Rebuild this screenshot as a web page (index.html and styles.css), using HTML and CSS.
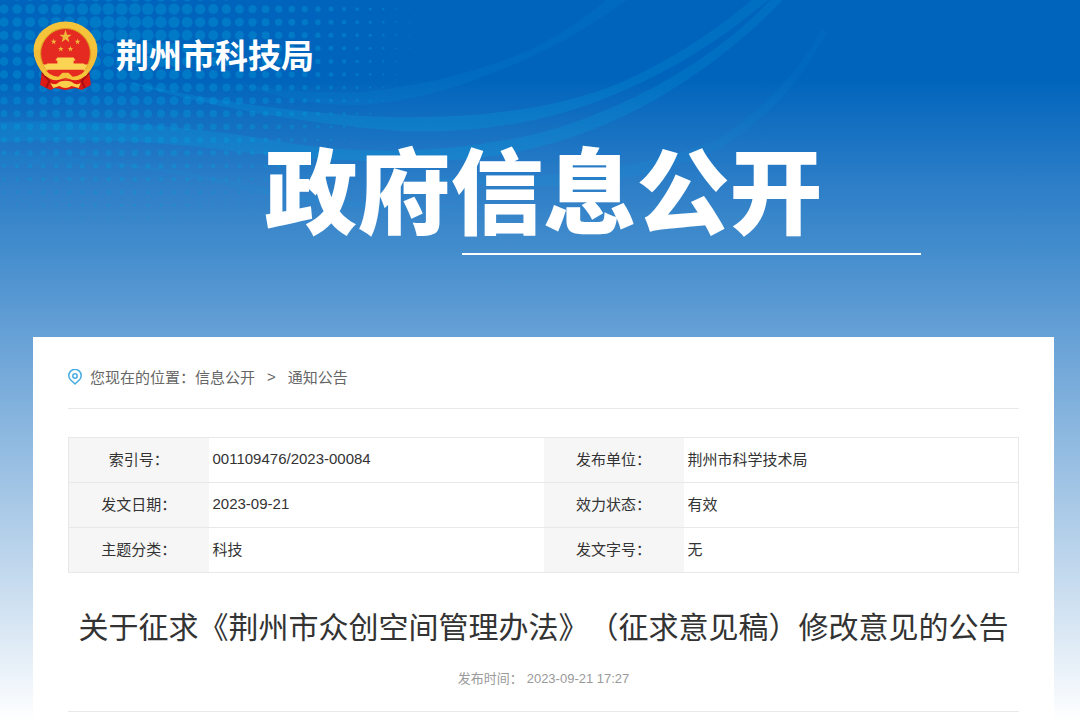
FILE: index.html
```html
<!DOCTYPE html>
<html lang="zh-CN">
<head>
    <meta charset="UTF-8">
    <meta name="viewport" content="width=device-width, initial-scale=1.0">
    <title>荆州市科技局 - 政府信息公开</title>
    <link rel="stylesheet" href="styles.css">
</head>
<body>
<svg class="bg" width="1080" height="340" viewBox="0 0 1080 340" aria-hidden="true">
    <defs>
        <linearGradient id="fade" gradientUnits="userSpaceOnUse" x1="0" y1="0" x2="860" y2="0">
            <stop offset="0" stop-color="#00a5e0" stop-opacity=".2"/>
            <stop offset=".5" stop-color="#00a5e0" stop-opacity=".24"/>
            <stop offset="1" stop-color="#00a5e0" stop-opacity=".14"/>
        </linearGradient>
    </defs>
    <g id="dots" fill="#00a0dc" fill-opacity=".34"></g>
    <g fill="url(#fade)">
        <path fill-opacity=".45" d="M240 84 Q300 94 360 92 Q450 84 530 50 Q575 27 607 0 L627 0 Q560 48 500 70 Q430 100 360 105 Q300 106 240 84Z"/>
        <path d="M120 80 Q240 108 360 116 Q520 124 620 83 Q690 52 752 0 L768 0 Q700 58 620 92 Q520 136 400 131 Q240 118 120 80Z"/>
        <path d="M0 122 Q130 118 260 138 Q400 166 540 133 Q640 105 720 45 Q750 22 770 0 L783 0 Q720 65 640 108 Q540 160 430 161 Q330 164 200 147 Q100 136 0 142Z"/>
        <path fill-opacity=".5" d="M420 178 Q620 182 720 138 Q790 90 822 29 L826 33 Q790 105 720 148 Q600 204 420 178Z"/>
        <path fill-opacity=".35" d="M0 152 Q140 160 280 190 Q380 210 480 206 Q340 218 220 184 Q110 156 0 166Z"/>
    </g>
</svg>

<header class="header">
    <svg class="emblem" viewBox="0 0 64 69" role="img" aria-label="国徽">
        <path d="M9 47 L7 63 L17 68 L22 66 L32 68 L42 66 L48 68 L57 63 L55 47Z" fill="#dc1b17"/>
        <path d="M9 51 L16 59 L13 66 M55 51 L48 59 L51 66" fill="none" stroke="#a80f12" stroke-width="2"/>
        <ellipse cx="32" cy="29" rx="31.500" ry="28.500" fill="#f6c43a"/>
        <path d="M1 28 Q1 43 12 54 H52 Q63 43 63 28Z" fill="#f3bd38"/>
        <circle cx="32" cy="32" r="24.500" fill="#e52a21" stroke="#d99a22"/>
        <g fill="#efb73a">
            <path id="star" d="M32 8.500 L33.500 13.500 L38 13.500 L34.500 16.300 L35.800 21 L32 18 L28.200 21 L29.500 16.300 L26 13.500 L30.500 13.500Z"/>
            <use href="#star" transform="translate(6 13.500) scale(.45)"/>
            <use href="#star" transform="translate(29.500 13.500) scale(.45)"/>
            <use href="#star" transform="translate(13 20.500) scale(.45)"/>
            <use href="#star" transform="translate(22.500 20.500) scale(.45)"/>
        </g>
        <path d="M24 36 L40 36 L42 39 L40 39 L40 42 L50 42 L51 43 L54 43 L51 48 L13 48 L10 43 L13 43 L14 42 L24 42 L24 39 L22 39Z" fill="#fbd454"/>
        <path d="M13 49 H51 Q45 56 38 57 H26 Q19 56 13 49Z" fill="#e52a21"/>
        <path d="M9 46 Q16 54 25 55 L29 51 H35 L39 55 Q48 54 55 46 L53 53 Q45 60 38 58 L32 56 L26 58 Q19 60 11 53Z" fill="#f6c43a"/>
        <path d="M17 61 Q23 64 26 60 Q32 58 38 60 Q42 64 47 61 L45 66 L38 64 Q32 68 26 64 L20 66Z" fill="#f9cf4c"/>
    </svg>
    <span class="site-name">荆州市科技局</span>
</header>

<div class="banner">
    <h1>政府信息公开</h1>
    <div class="banner-line"></div>
</div>

<main class="content">
    <nav class="position">
        <svg class="pin" viewBox="0 0 14 16" aria-hidden="true">
            <path d="M7 15 L2.500 10.800 A6.200 6.200 0 1 1 11.500 10.800Z" fill="none" stroke="#45ace2" stroke-width="1.500" stroke-linejoin="round"/>
            <circle cx="7" cy="7" r="2.200" fill="none" stroke="#45ace2" stroke-width="1.500"/>
        </svg>
        <span>您现在的位置：</span>
        <a href="#">信息公开</a>
        <span class="sep">&gt;</span>
        <a href="#">通知公告</a>
    </nav>

    <table class="info">
        <tr>
            <th scope="row">索引号：</th>
            <td>001109476/2023-00084</td>
            <th scope="row">发布单位：</th>
            <td>荆州市科学技术局</td>
        </tr>
        <tr>
            <th scope="row">发文日期：</th>
            <td>2023-09-21</td>
            <th scope="row">效力状态：</th>
            <td>有效</td>
        </tr>
        <tr>
            <th scope="row">主题分类：</th>
            <td>科技</td>
            <th scope="row">发文字号：</th>
            <td>无</td>
        </tr>
    </table>

    <h2>关于征求《荆州市众创空间管理办法》（征求意见稿）修改意见的公告</h2>
    <div class="meta">
        <span>发布时间：</span>
        <time datetime="2023-09-21T17:27">2023-09-21 17:27</time>
    </div>
</main>

<script src="dots.js"></script>
</body>
</html>
```
FILE: styles.css
```css
* {
    margin: 0;
    padding: 0;
    box-sizing: border-box;
}

body {
    min-height: 100vh;
    display: flex;
    flex-direction: column;
    position: relative;
    padding: 0 26px 0 33px;
    background: #fff linear-gradient(#0064bc 0, #0064bc 78px, #2b7dc7 180px, #458ecd 255px, #67a1d6 337px, #c9ddef 590px, #fff 722px) no-repeat;
    font-family: "Liberation Sans", "Noto Sans CJK SC", sans-serif;
    font-size: 15px;
    color: #333;
    text-spacing-trim: space-all;
}

a {
    color: inherit;
    text-decoration: none;
}

/* halftone and ribbons behind the header */
.bg {
    position: absolute;
    top: 0;
    left: 0;
    z-index: -1;
}

.header {
    display: flex;
    align-items: center;
    gap: 18px;
    padding-top: 21px;
    color: #fff;
}

.emblem {
    width: 65px;
    height: 70px;
}

.site-name {
    padding-top: 2px;
    font-size: 33px;
    font-weight: bold;
    line-height: 40px;
}

.banner {
    height: 246px;
    padding-top: 48px;
    color: #fff;
}

.banner h1 {
    font-size: 93px;
    font-weight: 900;
    line-height: 112px;
    text-align: center;
}

.banner-line {
    width: 45%;
    height: 2px;
    margin: 2px 0 0 42%;
    background: #fff;
}

.content {
    flex-grow: 1;
    padding: 0 35px;
    background: #fff;
}

.position {
    display: flex;
    align-items: center;
    height: 72px;
    padding-top: 8px;
    border-bottom: 1px solid #e8e8e8;
    color: #666;
}

.pin {
    width: 14px;
    height: 16px;
    margin-right: 8px;
}

.sep {
    margin: 0 12px;
}

.info {
    width: 100%;
    margin-top: 28px;
    table-layout: fixed;
    border-collapse: collapse;
    border: 1px solid #e8e8e8;
}

.info tr {
    height: 45px;
    border-bottom: 1px solid #e8e8e8;
}

.info th,
.info td {
    padding-bottom: 3px;
}

.info th {
    width: 140px;
    background: #f6f6f6;
    font-weight: normal;
    text-align: center;
}

.info td {
    padding-left: 4px;
}

h2 {
    margin-top: 33px;
    font-size: 30px;
    font-weight: normal;
    line-height: 44px;
    text-align: center;
    white-space: nowrap;
}

.meta {
    display: flex;
    justify-content: center;
    gap: 4px;
    padding: 19px 0 22px;
    border-bottom: 1px solid #e8e8e8;
    font-size: 13px;
    line-height: 20px;
    color: #999;
}
```
FILE: dots.js
```js
const dots = document.getElementById('dots');
const step = 13.08;

// dots shrink with the distance from the brightest point near the top left
for (let row = 0; row < 19; row++) {
    for (let col = 0; col < 33; col++) {
        const x = 4 + col * step;
        const y = -4 + row * step;
        const dx = (x - 125) / (x > 125 ? 310 : 340);
        const dy = (y - 22) / 225;
        const r = 6.3 * (1 - Math.pow(Math.hypot(dx, dy), 1.25));
        if (r < 0.4) continue;
        const dot = document.createElementNS('http://www.w3.org/2000/svg', 'circle');
        dot.setAttribute('cx', x);
        dot.setAttribute('cy', y);
        dot.setAttribute('r', r);
        dots.appendChild(dot);
    }
}
```
